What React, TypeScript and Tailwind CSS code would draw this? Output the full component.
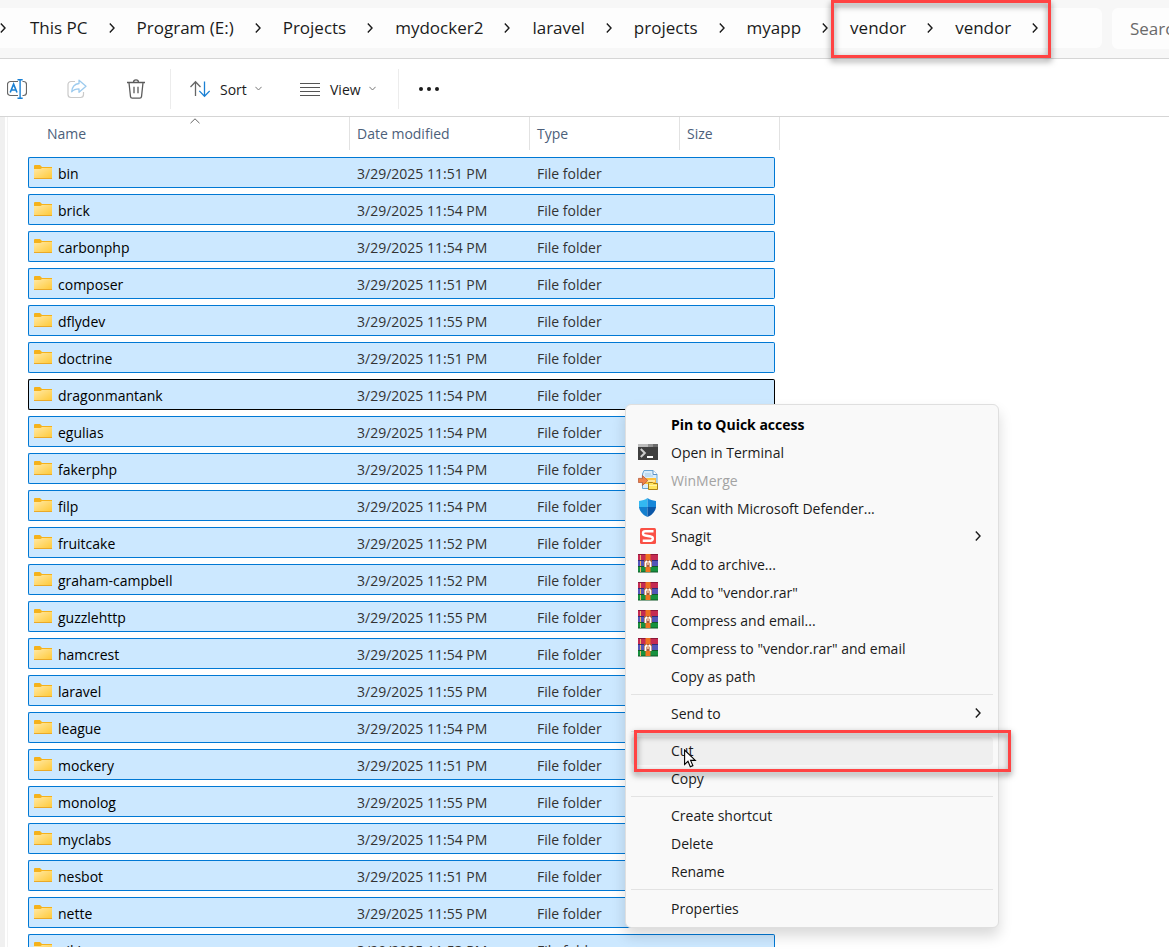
import { useState } from "react";
import clsx from "clsx";

type Folder = {
  name: string;
  time: string;
};

type MenuEntry = {
  label: string;
  icon?: "terminal" | "winmerge" | "defender" | "snagit" | "rar";
  bold?: boolean;
  disabled?: boolean;
  submenu?: boolean;
};

const crumbs = ["This PC", "Program (E:)", "Projects", "mydocker2", "laravel", "projects", "myapp", "vendor", "vendor"];

const folders: Folder[] = [
  { name: "bin", time: "11:51" },
  { name: "brick", time: "11:54" },
  { name: "carbonphp", time: "11:54" },
  { name: "composer", time: "11:51" },
  { name: "dflydev", time: "11:55" },
  { name: "doctrine", time: "11:51" },
  { name: "dragonmantank", time: "11:54" },
  { name: "egulias", time: "11:54" },
  { name: "fakerphp", time: "11:54" },
  { name: "filp", time: "11:54" },
  { name: "fruitcake", time: "11:52" },
  { name: "graham-campbell", time: "11:52" },
  { name: "guzzlehttp", time: "11:55" },
  { name: "hamcrest", time: "11:54" },
  { name: "laravel", time: "11:55" },
  { name: "league", time: "11:54" },
  { name: "mockery", time: "11:51" },
  { name: "monolog", time: "11:55" },
  { name: "myclabs", time: "11:54" },
  { name: "nesbot", time: "11:51" },
  { name: "nette", time: "11:55" },
  { name: "nikic", time: "11:53" },
];

const menuGroups: MenuEntry[][] = [
  [
    { label: "Pin to Quick access", bold: true },
    { label: "Open in Terminal", icon: "terminal" },
    { label: "WinMerge", icon: "winmerge", disabled: true },
    { label: "Scan with Microsoft Defender...", icon: "defender" },
    { label: "Snagit", icon: "snagit", submenu: true },
    { label: "Add to archive...", icon: "rar" },
    { label: 'Add to "vendor.rar"', icon: "rar" },
    { label: "Compress and email...", icon: "rar" },
    { label: 'Compress to "vendor.rar" and email', icon: "rar" },
    { label: "Copy as path" },
  ],
  [{ label: "Send to", submenu: true }],
  [{ label: "Cut" }, { label: "Copy" }],
  [{ label: "Create shortcut" }, { label: "Delete" }, { label: "Rename" }],
  [{ label: "Properties" }],
];

function ChevronRight() {
  return (
    <svg width="6" height="10" viewBox="0 0 6 10" fill="none" stroke="currentColor" strokeWidth="1.4" className="shrink-0">
      <path d="M.8.6 5 5 .8 9.4" />
    </svg>
  );
}

function ChevronDown() {
  return (
    <svg width="7" height="5" viewBox="0 0 7 5" fill="none" stroke="#777" strokeWidth="1">
      <path d="M.4.8 3.5 4 6.6.8" />
    </svg>
  );
}

function FolderIcon() {
  return (
    <svg width="18" height="14" viewBox="0 0 18 14" className="shrink-0">
      <defs>
        <linearGradient id="folder" x1="0" y1="0" x2="1" y2="1">
          <stop offset="0" stopColor="#ffe9a6" />
          <stop offset="1" stopColor="#ffc937" />
        </linearGradient>
      </defs>
      <path d="M0 1q0-1 1-1h5l2 2h10v5H0z" fill="#f5b21b" />
      <path d="M0 4h6.5L8 3h10v10.5H0z" fill="url(#folder)" />
      <path d="M0 13h18v1H0z" fill="#eaa928" />
    </svg>
  );
}

function RenameIcon() {
  return (
    <svg width="20" height="20" viewBox="0 0 20 20" fill="none">
      <path d="M11 2.5H3.5a3 3 0 0 0-3 3v8a3 3 0 0 0 3 3H11M15.5 2.5h1a3 3 0 0 1 3 3v8a3 3 0 0 1-3 3h-1" stroke="#666" strokeWidth="1.2" />
      <path d="m3.2 13.5 3.4-8.4 3.4 8.4M4.3 11h4.6" stroke="#1a80d4" strokeWidth="1.6" />
      <path d="M10.5.7h5.2M10.5 19.3h5.2M13.1.7v18.6" stroke="#1a80d4" strokeWidth="1.4" />
    </svg>
  );
}

function ShareIcon() {
  return (
    <svg width="20" height="20" viewBox="0 0 20 20" fill="none" strokeLinejoin="round">
      <path d="M8 2.5H4a3 3 0 0 0-3 3v10a3 3 0 0 0 3 3h9.500a3 3 0 0 0 3-3V13" stroke="#cacaca" strokeWidth="1.2" />
      <path d="M12 1.200 19 7.300l-7 6V9.800c-3.300 0-5.400.8-7.300 3C5 8.500 7.500 5 12 4.500z" stroke="#9dcbee" strokeWidth="1.300" />
    </svg>
  );
}

function TrashIcon() {
  return (
    <svg width="18" height="20" viewBox="0 0 18 20" fill="none" stroke="#5b5b5b" strokeWidth="1.3">
      <path d="M0 3.500h18M6.500 3.300a2.500 2.500 0 0 1 5 0M2 3.700l1.500 14q.2 1.500 1.700 1.500h7.600q1.500 0 1.700-1.500L16 3.700M7 7.700v6.500M11 7.700v6.500" />
    </svg>
  );
}

function SortIcon() {
  return (
    <svg width="20" height="18" viewBox="0 0 20 18" fill="none" strokeWidth="1.3">
      <path d="M5.500 16V2M.5 7l5-5.300 5 5.300" stroke="#666" />
      <path d="M14.500 1.500v14.500M9.300 10.900l5.200 5.300 5.200-5.300" stroke="#1a80d4" />
    </svg>
  );
}

function ViewIcon() {
  return (
    <svg width="20" height="14" viewBox="0 0 20 14" stroke="#555" strokeWidth="1.100">
      <path d="M0 1.500h20M0 5.500h20M0 9.500h20M0 13.500h20" />
    </svg>
  );
}

function MenuIcon({ name }: { name: NonNullable<MenuEntry["icon"]> }) {
  switch (name) {
    case "terminal":
      return (
        <svg width="20" height="20" viewBox="0 0 20 20">
          <path d="M0 2h20v16H0z" fill="#3f3f3f" />
          <path d="M0 2h10v3H0z" fill="#bcbcbc" />
          <path d="M10 2h5v3h-5z" fill="#929292" />
          <path d="M15 2h5v3h-5z" fill="#6c6c6c" />
          <path d="m2.800 7 4 4-4 4" fill="none" stroke="#ccc" strokeWidth="2" />
          <path d="M9 14h6v2H9z" fill="#fff" />
        </svg>
      );
    case "winmerge":
      return (
        <svg width="20" height="20" viewBox="0 0 20 20">
          <path d="M6 .5h9l4 4v14H4.500V4z" fill="#d9edfb" stroke="#69a5d3" />
          <path d="M15 .5v4h4" fill="#fff" stroke="#5991c7" />
          <path d="M7 4h6M7 6h8" stroke="#a3cbe9" />
          <path d="M5 8h13v6H5z" fill="#ffc13c" />
          <path d="M7 10h10v2H7z" fill="#ffe79b" />
          <path d="M.4 8.400h4V5.500l5.400 5-5.400 5v-3H.4z" fill="#ef8149" stroke="#b55b3b" strokeWidth=".8" />
          <path d="M10.500 13.500v-1h4l1 1h4v6h-9z" fill="#ffe45e" stroke="#a98119" />
          <path d="M11 15.500h8" stroke="#fff4a5" />
        </svg>
      );
    case "defender":
      return (
        <svg width="20" height="20" viewBox="0 0 20 20">
          <path d="M9.500 0C7 2 4.500 2.500 1 3v6.500h8.500z" fill="#33b8f1" />
          <path d="M9.500 0c2.500 2 5 2.500 8.500 3v6.500H9.500z" fill="#1687d9" />
          <path d="M1 9h8.500v10C5 17 1.500 13.500 1 9z" fill="#147fce" />
          <path d="M18 9H9.500v10c4.500-2 8-5.500 8.500-10z" fill="#0b57a8" />
        </svg>
      );
    case "snagit":
      return (
        <svg width="20" height="20" viewBox="0 0 20 20">
          <rect x="2" y="2" width="16" height="16" rx="1.500" fill="#fa5146" />
          <path d="M15.500 5.200H7.200q-2.200 0-2.200 2t2.200 2.300l5.600 1q2 .3 2 2.100t-2 2.100H4.700" fill="none" stroke="#fff" strokeWidth="2.400" />
        </svg>
      );
    case "rar":
      return (
        <svg width="20" height="20" viewBox="0 0 20 20">
          <path d="M0 0h20v6H0z" fill="#c52b52" />
          <path d="M0 0h20v1H0z" fill="#8d1838" />
          <path d="M0 6h20v6H0z" fill="#5355b8" />
          <path d="M0 6h20v1H0z" fill="#302d79" />
          <path d="M0 12h20v6H0z" fill="#17913f" />
          <path d="M0 12h20v1H0zM0 17.500h20v1H0z" fill="#125828" />
          <path d="M2.500 1v5M2.500 7v5M2.500 13v5" stroke="#efb765" />
          <path d="M7.500 0h5v18h-5z" fill="#ef7420" />
          <path d="M6 6h8v7H6z" fill="#a95a38" />
          <path d="M7.500 13V8.500L9 7M12.500 13V8.500L11 7" fill="none" stroke="#fff" strokeWidth="1.800" />
          <path d="M10 7v4" stroke="#ffd5ae" strokeWidth="1.500" />
        </svg>
      );
  }
}

function AddressBar() {
  return (
    <header className="flex h-[59px] shrink-0 items-start gap-[10px] border-b border-[#d5d5d5] bg-[#f7f7f7] pt-2">
      <nav aria-label="Address" className="flex h-10 min-w-0 flex-1 items-center overflow-hidden rounded-r-md bg-[#fdfdfd] text-[17px] text-[#1b1b1b]">
        <ChevronRight />
        <div className="flex items-center pl-0.5">
          {crumbs.map((crumb, i) => (
            <div key={i} className="flex shrink-0 items-center">
              <a href="#" className="pr-[21px] pl-[22px] leading-6">
                {crumb}
              </a>
              <ChevronRight />
            </div>
          ))}
        </div>
      </nav>
      <input
        type="text"
        aria-label="Search vendor"
        placeholder="Search vendor"
        className="h-[41px] w-[57px] shrink-0 rounded-l-md bg-[#fdfdfd] pl-[18px] text-[17px] outline-none placeholder:text-[#6a6a6a]"
      />
    </header>
  );
}

function Toolbar() {
  return (
    <div className="flex h-[58px] shrink-0 items-center border-b border-[#d5d5d5] bg-white pt-0.5 pl-[7px] text-sm text-[#1b1b1b]">
      <div className="flex items-center gap-10">
        <button type="button" aria-label="Rename">
          <RenameIcon />
        </button>
        <button type="button" aria-label="Share" disabled>
          <ShareIcon />
        </button>
        <button type="button" aria-label="Delete">
          <TrashIcon />
        </button>
      </div>
      <div className="ml-[25px] h-10 w-px bg-[#ececec]" />
      <button type="button" className="ml-[19px] flex w-[74px] items-center">
        <SortIcon />
        <span className="mr-2 ml-[10px] pt-0.5">Sort</span>
        <ChevronDown />
      </button>
      <button type="button" className="ml-9 flex w-[78px] items-center">
        <ViewIcon />
        <span className="mr-2 ml-[10px] pt-0.5">View</span>
        <ChevronDown />
      </button>
      <div className="ml-5 h-10 w-px bg-[#ececec]" />
      <button type="button" aria-label="See more" className="ml-[19px]">
        <svg width="22" height="6" viewBox="0 0 22 6" fill="#1b1b1b">
          <circle cx="3" cy="3" r="2" />
          <circle cx="11" cy="3" r="2" />
          <circle cx="19" cy="3" r="2" />
        </svg>
      </button>
    </div>
  );
}

function FileTable({ focused }: { focused: string }) {
  return (
    <table className="w-[752px] table-fixed border-collapse text-left text-sm">
      <colgroup>
        <col className="w-[322px]" />
        <col className="w-[180px]" />
        <col className="w-[150px]" />
        <col className="w-[95px]" />
        <col className="w-[5px]" />
      </colgroup>
      <thead className="text-[#4c607a]">
        <tr>
          <th className="p-0 pb-[7px] font-normal" aria-sort="ascending">
            <div className="relative h-[33px] border-r border-[#e2e2e2] pl-[19px] leading-[34px]">
              Name
              <svg width="10" height="6" viewBox="0 0 10 6" fill="none" stroke="#666" className="absolute top-px left-[162px]">
                <path d="M.5 5.200 5 .8l4.500 4.400" />
              </svg>
            </div>
          </th>
          <th className="p-0 pb-[7px] font-normal">
            <div className="h-[33px] border-r border-[#e2e2e2] pl-[7px] leading-[34px]">Date modified</div>
          </th>
          <th className="p-0 pb-[7px] font-normal">
            <div className="h-[33px] border-r border-[#e2e2e2] pl-[7px] leading-[34px]">Type</div>
          </th>
          <th colSpan={2} className="p-0 pb-[7px] font-normal">
            <div className="h-[33px] border-r border-[#e2e2e2] pl-[7px] leading-[34px]">Size</div>
          </th>
        </tr>
      </thead>
      <tbody>
        {folders.map((folder) => {
          const border = folder.name === focused ? "border-black" : "border-[#0078d4]";
          return (
            <tr key={folder.name} aria-selected="true">
              <td className="p-0 pb-[6px]">
                <div className={clsx("flex h-[31px] items-start gap-[6px] rounded-l-[2px] border-y border-l bg-[#cce8ff] pt-[7px] pl-[5px] text-black", border)}>
                  <FolderIcon />
                  <span className="leading-[18px]">{folder.name}</span>
                </div>
              </td>
              <td className="p-0 pb-[6px]">
                <div className={clsx("h-[31px] border-y bg-[#cce8ff] pl-[7px] leading-[31px] text-[#333]", border)}>3/29/2025 {folder.time} PM</div>
              </td>
              <td className="p-0 pb-[6px]">
                <div className={clsx("h-[31px] border-y bg-[#cce8ff] pl-[7px] leading-[31px] text-[#333]", border)}>File folder</div>
              </td>
              <td className="p-0 pb-[6px]">
                <div className={clsx("h-[31px] rounded-r-[2px] border-y border-r bg-[#cce8ff]", border)} />
              </td>
              <td className="p-0" />
            </tr>
          );
        })}
      </tbody>
    </table>
  );
}

function ContextMenu({ active, onHover }: { active: string; onHover: (label: string) => void }) {
  return (
    <div role="menu" className="absolute top-[404px] left-[625px] w-[374px] rounded-md border border-[#dfdfdf] bg-[#f9f9f9] px-[5px] pt-[6px] pb-1 text-sm text-[#1b1b1b] shadow-[0_8px_14px_rgba(0,0,0,0.15)]">
      {menuGroups.map((group, i) => (
        <div key={i}>
          {i > 0 && <div className="mt-[3px] mb-[5px] h-px bg-[#e3e3e3]" />}
          {group.map((entry) => (
            <button
              key={entry.label}
              type="button"
              role="menuitem"
              disabled={entry.disabled}
              onMouseEnter={() => onHover(entry.label)}
              className={clsx(
                "flex h-7 w-full items-center rounded pr-3 pl-[7px] text-left",
                entry.bold && "font-bold text-black",
                entry.disabled && "text-[#a3a3a3]",
                entry.label === active && "bg-[#efefef]"
              )}
            >
              <span className="mr-[13px] w-5 pb-0.5">{entry.icon && <MenuIcon name={entry.icon} />}</span>
              <span className="flex-1">{entry.label}</span>
              {entry.submenu && (
                <span className="pb-0.5">
                  <ChevronRight />
                </span>
              )}
            </button>
          ))}
        </div>
      ))}
    </div>
  );
}

export default function App() {
  const [active, setActive] = useState("Cut");

  return (
    <div className="relative flex h-screen flex-col overflow-hidden bg-white pb-[5px] font-['Open_Sans','Noto_Sans',sans-serif]">
      <AddressBar />
      <Toolbar />
      <main className="flex min-h-0 flex-1 overflow-hidden">
        <div className="w-[5px] shrink-0 bg-[#f0f0f0]" />
        <div className="ml-0.5 flex-1 border-l border-[#f3f3f3] pl-5">
          <FileTable focused="dragonmantank" />
        </div>
      </main>

      <ContextMenu active={active} onHover={setActive} />

      {/* callouts */}
      <div className="pointer-events-none absolute top-0 left-[831px] h-[58px] w-[220px] border-3 border-[#ff4343] drop-shadow-[0_3px_3px_rgba(0,0,0,0.5)]" />
      <div className="pointer-events-none absolute top-[730px] left-[634px] h-[42px] w-[377px] border-3 border-[#ff4343] drop-shadow-[0_3px_3px_rgba(0,0,0,0.5)]" />

      <svg width="13" height="19" viewBox="0 0 13 19" className="pointer-events-none absolute top-[749px] left-[684px]">
        <path d="M.6 1v14.500l3.400-3.200 2.300 5.400 2.600-1.100-2.300-5.200h4.700z" fill="#fff" stroke="#000" strokeWidth="1.100" />
      </svg>
    </div>
  );
}
